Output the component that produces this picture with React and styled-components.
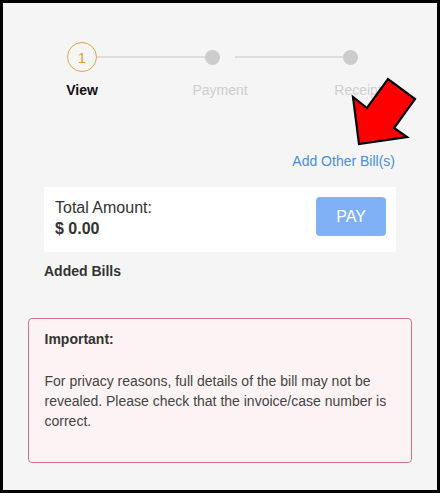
import React from "react";
import styled, { createGlobalStyle } from "styled-components";

const GlobalStyle = createGlobalStyle`
  html, body {
    margin: 0;
    padding: 0;
  }
  body {
    font-family: "Liberation Sans", Arial, sans-serif;
    color: #333;
  }
`;

const Frame = styled.div`
  position: relative;
  box-sizing: border-box;
  width: 440px;
  height: 493px;
  border: 3px solid #000;
  background: #f5f5f5;
  overflow: hidden;
`;

const Steps = styled.div`
  display: grid;
  grid-template-columns: repeat(3, 1fr);
  padding: 39px 10px 0;
`;

const Step = styled.div`
  position: relative;
  display: flex;
  flex-direction: column;
  align-items: center;

  &:not(:last-child)::after {
    content: "";
    position: absolute;
    top: 14px;
    left: calc(50% + 15px);
    width: calc(100% - 30px);
    height: 2px;
    background: #dedede;
  }
`;

const IconBox = styled.div`
  width: 30px;
  height: 30px;
  display: flex;
  align-items: center;
  justify-content: ${(p) => (p.$active ? "center" : "flex-start")};
  margin-bottom: 8px;
`;

const NumberCircle = styled.div`
  box-sizing: border-box;
  width: 30px;
  height: 30px;
  border: 1.5px solid #eea33c;
  border-radius: 50%;
  display: flex;
  align-items: center;
  justify-content: center;
  color: #e99a2c;
  font-size: 15px;
  background: #f5f5f5;
`;

const Dot = styled.div`
  position: relative;
  z-index: 1;
  width: 15px;
  height: 15px;
  border-radius: 50%;
  background: #cccccc;
`;

const StepLabel = styled.div`
  font-size: 14px;
  line-height: 20px;
  font-weight: ${(p) => (p.$active ? 700 : 400)};
  color: ${(p) => (p.$active ? "#111" : "#cfcfcf")};
`;

const Main = styled.div`
  padding: 0 41px;
`;

const AddLink = styled.a`
  display: block;
  margin-top: 51px;
  text-align: right;
  font-size: 14px;
  line-height: 20px;
  color: #4a8fdc;
  text-decoration: none;
  padding-right: 1px;
`;

const Card = styled.div`
  margin-top: 16px;
  background: #fff;
  display: flex;
  justify-content: space-between;
  align-items: flex-start;
  padding: 10px 10px 13px 11px;
`;

const AmountBlock = styled.div`
  font-size: 16px;
  line-height: 21px;
  color: #333;
`;

const Amount = styled.div`
  font-weight: 700;
`;

const PayButton = styled.button`
  width: 70px;
  height: 39px;
  border: none;
  border-radius: 4px;
  background: #80b1f6;
  color: #fff;
  font-family: inherit;
  font-size: 16px;
  padding: 0;
`;

const SectionTitle = styled.div`
  margin-top: 9px;
  font-size: 14px;
  line-height: 20px;
  font-weight: 700;
  color: #333;
`;

const Notice = styled.div`
  margin: 37px 25px 0;
  box-sizing: border-box;
  height: 145px;
  border: 1.5px solid #d5708c;
  border-radius: 4px;
  background: #fdf3f5;
  padding: 9.5px 10px 0 15.5px;
  font-size: 14px;
  line-height: 20px;
  color: #444;
`;

const NoticeTitle = styled.div`
  font-weight: 700;
  color: #333;
`;

const NoticeText = styled.p`
  margin: 22px 0 0;
`;

const Arrow = styled.svg`
  position: absolute;
  left: 0;
  top: 0;
  pointer-events: none;
`;

const steps = [
  { label: "View", active: true },
  { label: "Payment" },
  { label: "Receipt" },
];

export default function App() {
  return (
    <>
      <GlobalStyle />
      <Frame>
        <Steps>
          {steps.map((s, i) => (
            <Step key={s.label}>
              <IconBox $active={s.active}>
                {s.active ? <NumberCircle>{i + 1}</NumberCircle> : <Dot />}
              </IconBox>
              <StepLabel $active={s.active}>{s.label}</StepLabel>
            </Step>
          ))}
        </Steps>
        <Main>
          <AddLink href="#">Add Other Bill(s)</AddLink>
          <Card>
            <AmountBlock>
              <div>Total Amount:</div>
              <Amount>$ 0.00</Amount>
            </AmountBlock>
            <PayButton>PAY</PayButton>
          </Card>
          <SectionTitle>Added Bills</SectionTitle>
        </Main>
        <Notice>
          <NoticeTitle>Important:</NoticeTitle>
          <NoticeText>
            For privacy reasons, full details of the bill may not be revealed.
            Please check that the invoice/case number is correct.
          </NoticeText>
        </Notice>
        <Arrow width="440" height="493" viewBox="3 3 440 493">
          <polygon
            points="359,144 353,97 367,108 388,79 415,99 394,128 407,137"
            fill="#ff0000"
            stroke="#000"
            strokeWidth="2.2"
            strokeLinejoin="miter"
          />
        </Arrow>
      </Frame>
    </>
  );
}
